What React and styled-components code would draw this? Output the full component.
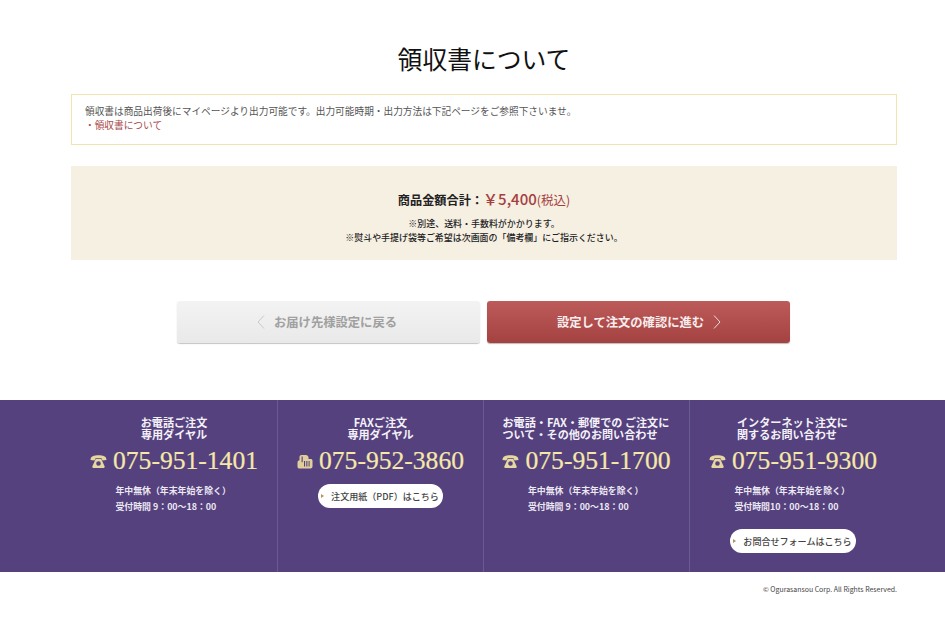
import React from 'react';
import styled, { createGlobalStyle } from 'styled-components';

const GOTHIC = `"Noto Sans CJK JP", "Liberation Sans", sans-serif`;
const SERIF = `"Liberation Serif", "Noto Sans CJK JP", serif`;

const Global = createGlobalStyle`
  html, body { margin: 0; padding: 0; background: #fff; }
  body { font-family: ${GOTHIC}; color: #333; overflow: hidden; }
  * { box-sizing: border-box; }
`;

const Page = styled.div`
  width: 945px;
  height: 623px;
  overflow: hidden;
`;

const Main = styled.main`
  width: 826px;
  margin-left: 71px;
  padding-top: 42px;
`;

const Title = styled.h1`
  margin: 0 0 19px;
  font-size: 24.8px;
  line-height: 33px;
  font-weight: 400;
  color: #111;
  text-align: center;
`;

const Notice = styled.div`
  height: 51px;
  padding: 9px 13px;
  border: 1px solid #f0e5ac;
  font-size: 9.69px;
  line-height: 14px;
  color: #555;
`;

const NoticeLink = styled.a`
  display: block;
  color: #a84a4a;
`;

const Summary = styled.section`
  height: 94px;
  margin-top: 21px;
  padding-top: 22px;
  background: #f6f0e2;
  text-align: center;
`;

const Total = styled.p`
  margin: 0 0 7px;
  height: 22px;
  font-size: 12.2px;
  line-height: 22px;
  font-weight: 700;
  color: #222;
`;

const Price = styled.span`
  font-size: 15px;
  font-weight: 500;
  color: #a53f3f;
`;

const Tax = styled.span`
  font-size: 12.5px;
  font-weight: 400;
  color: #a53f3f;
`;

const Note = styled.p`
  margin: 0;
  font-size: 8.96px;
  line-height: 14px;
  font-weight: 500;
  color: #222;
`;

const Actions = styled.div`
  display: flex;
  gap: 7px;
  margin-top: 41px;
  padding-left: 106px;
`;

const StepButton = styled.a`
  display: flex;
  align-items: center;
  justify-content: center;
  gap: 8px;
  width: 303px;
  height: 42px;
  padding: ${(p) => (p.$primary ? '0 0 0 2px' : '0 4px 0 0')};
  border-radius: 3px;
  font-size: 12.3px;
  font-weight: 700;
  color: ${(p) => (p.$primary ? '#f8eeee' : '#a0a0a0')};
  background: ${(p) =>
    p.$primary
      ? 'linear-gradient(#bd5a5a, #a44242)'
      : 'linear-gradient(#f3f3f3, #e9e9e9)'};
  box-shadow: 0 1px 1px ${(p) => (p.$primary ? '#bbb' : '#c4c4c4')};
`;

const Chevron = styled.svg`
  width: 10px;
  height: 14px;
  fill: none;
  stroke: ${(p) => (p.$light ? '#f0d8d8' : '#c8c8c8')};
  stroke-width: 1;
`;

const Footer = styled.footer`
  height: 172px;
  margin-top: 57px;
  padding-left: 71px;
  background: #54417e;
`;

const Columns = styled.div`
  display: grid;
  grid-template-columns: 207px repeat(3, 206px);
  height: 100%;
`;

const Column = styled.div`
  padding-top: 17px;
  border-right: ${(p) => (p.$last ? 'none' : '1px solid #6a5a92')};
  display: flex;
  flex-direction: column;
  align-items: center;
`;

const ColumnTitle = styled.h2`
  margin: 0;
  width: ${(p) => p.$width || '70px'};
  min-height: 23px;
  font-size: 11.1px;
  line-height: 11.5px;
  font-weight: 700;
  color: #f4f1f8;
  text-align: ${(p) => p.$align || 'center'};
  word-break: ${(p) => (p.$align ? 'normal' : 'keep-all')};
`;

const Phone = styled.div`
  display: flex;
  align-items: center;
  gap: 6px;
  margin-top: 6px;
  height: 30px;
  font-family: ${SERIF};
  font-size: 25.6px;
  line-height: 30px;
  color: #f6e8a8;
  -webkit-text-stroke: 0.2px #f6e8a8;
  white-space: nowrap;
`;

const PhoneIcon = styled.svg`
  width: 17px;
  height: 13px;
  fill: #e6d6a0;
`;

const FaxIcon = styled.svg`
  width: 16px;
  height: 15px;
  fill: #e0cf9c;
`;

const Hours = styled.p`
  margin: 7px 0 0;
  width: 117px;
  font-size: 8.9px;
  line-height: 16px;
  font-weight: 700;
  color: #ece8f2;
  white-space: nowrap;
`;

const Pill = styled.a`
  display: flex;
  align-items: center;
  gap: 7px;
  height: 24px;
  margin-top: ${(p) => p.$top || '8px'};
  padding: 0 4px 0 3px;
  border-radius: 12px;
  background: #fff;
  font-size: 9.05px;
  font-weight: 500;
  color: #444;
  white-space: nowrap;
  &::before {
    content: '';
    border-left: 3px solid #b4935a;
    border-top: 2px solid transparent;
    border-bottom: 2px solid transparent;
  }
`;

const Copyright = styled.p`
  margin: 11px 48px 0 0;
  font-size: 6.95px;
  line-height: 12px;
  color: #444;
  text-align: right;
`;

const Telephone = () => (
  <PhoneIcon viewBox="0 0 17 13">
    <path d="M.5 5C.5 1.2 4 .3 8.5.3S16.5 1.2 16.5 5l-4 .6-1-2.4h-6l-1 2.4z" />
    <path
      fillRule="evenodd"
      d="M5.7 4h5.6l3.4 7.6q.2 1.4-1 1.4H3.300q-1.200 0-1-1.400zM8.500 6.200a2.300 2.300 0 1 0 0 4.600 2.300 2.300 0 0 0 0-4.600z"
    />
  </PhoneIcon>
);

export default function App() {
  return (
    <Page>
      <Global />
      <Main>
        <Title>領収書について</Title>
        <Notice>
          領収書は商品出荷後にマイページより出力可能です。出力可能時期・出力方法は下記ページをご参照下さいませ。
          <NoticeLink>・領収書について</NoticeLink>
        </Notice>
        <Summary>
          <Total>
            商品金額合計：<Price>￥5,400</Price><Tax>(税込)</Tax>
          </Total>
          <Note>※別途、送料・手数料がかかります。</Note>
          <Note>※熨斗や手提げ袋等ご希望は次画面の「備考欄」にご指示ください。</Note>
        </Summary>
        <Actions>
          <StepButton>
            <Chevron viewBox="0 0 10 14"><path d="M8 0.5 L2 7 L8 13.5" /></Chevron>
            お届け先様設定に戻る
          </StepButton>
          <StepButton $primary>
            設定して注文の確認に進む
            <Chevron $light viewBox="0 0 10 14"><path d="M2 0.5 L8 7 L2 13.5" /></Chevron>
          </StepButton>
        </Actions>
      </Main>
      <Footer>
        <Columns>
          <Column>
            <ColumnTitle>お電話ご注文 専用ダイヤル</ColumnTitle>
            <Phone><Telephone />075-951-1401</Phone>
            <Hours>年中無休（年末年始を除く）<br />受付時間 9：00～18：00</Hours>
          </Column>
          <Column>
            <ColumnTitle>FAXご注文 専用ダイヤル</ColumnTitle>
            <Phone>
              <FaxIcon viewBox="0 0 16 15">
                <path
                  fillRule="evenodd"
                  d="M4.500 1h4.300c1.500 0 2.700 1 2.700 2.500V5h2.300c.9 0 1.700.7 1.700 1.600v6c0 1-.8 1.900-1.900 1.900H2.400C1.300 14.500.5 13.700.5 12.700V8.600C.5 7.400 1.300 6.500 2.500 6.300V3C2.500 1.900 3.400 1 4.500 1zM4.600 2.500v5.700h1.100V2.500zM7 7v5.500h1.100V7zm2.300 0v5.500h1.100V7zm2.300 0v5.500h1V7z"
                />
              </FaxIcon>
              075-952-3860
            </Phone>
            <Pill>注文用紙（PDF）はこちら</Pill>
          </Column>
          <Column>
            <ColumnTitle $width="168px" $align="left">お電話・FAX・郵便での ご注文について・その他のお問い合わせ</ColumnTitle>
            <Phone><Telephone />075-951-1700</Phone>
            <Hours>年中無休（年末年始を除く）<br />受付時間 9：00～18：00</Hours>
          </Column>
          <Column $last>
            <ColumnTitle $width="112px" $align="left">インターネット注文に関するお問い合わせ</ColumnTitle>
            <Phone><Telephone />075-951-9300</Phone>
            <Hours>年中無休（年末年始を除く）<br />受付時間10：00～18：00</Hours>
            <Pill $top="14px">お問合せフォームはこちら</Pill>
          </Column>
        </Columns>
      </Footer>
      <Copyright>© Ogurasansou Corp. All Rights Reserved.</Copyright>
    </Page>
  );
}
